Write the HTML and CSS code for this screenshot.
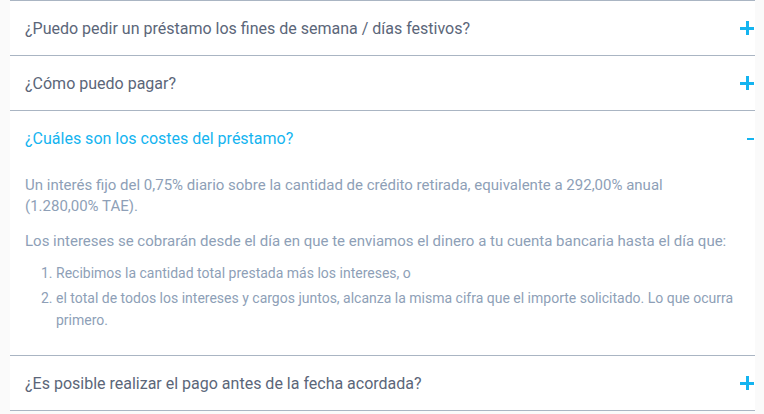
FILE: index.html
```html
<!DOCTYPE html>
<html lang="es">
<head>
    <meta charset="UTF-8">
    <meta name="viewport" content="width=device-width, initial-scale=1.0">
    <title>Preguntas frecuentes</title>
    <link rel="stylesheet" href="styles.css">
</head>
<body>
    <div class="faq">
        <div class="faq-item">
            <div class="faq-question">
                <span>¿Puedo pedir un préstamo los fines de semana / días festivos?</span>
                <span class="faq-toggle faq-plus"></span>
            </div>
        </div>

        <div class="faq-item">
            <div class="faq-question">
                <span>¿Cómo puedo pagar?</span>
                <span class="faq-toggle faq-plus"></span>
            </div>
        </div>

        <div class="faq-item faq-open">
            <div class="faq-question">
                <span>¿Cuáles son los costes del préstamo?</span>
                <span class="faq-toggle faq-minus"></span>
            </div>
            <div class="faq-answer">
                <p>Un interés fijo del 0,75% diario sobre la cantidad de crédito retirada, equivalente a 292,00% anual (1.280,00% TAE).</p>
                <p>Los intereses se cobrarán desde el día en que te enviamos el dinero a tu cuenta bancaria hasta el día que:</p>
                <ol>
                    <li>Recibimos la cantidad total prestada más los intereses, o</li>
                    <li>el total de todos los intereses y cargos juntos, alcanza la misma cifra que el importe solicitado. Lo que ocurra primero.</li>
                </ol>
            </div>
        </div>

        <div class="faq-item">
            <div class="faq-question">
                <span>¿Es posible realizar el pago antes de la fecha acordada?</span>
                <span class="faq-toggle faq-plus"></span>
            </div>
        </div>
    </div>
</body>
</html>
```

FILE: styles.css
```css
:root {
    --faq-blue: #14b4f0;
    --faq-text: #5b6679;
    --faq-light-text: #8e9fb7;
    --faq-border: #aab5c3;
    --faq-bg: #fafafa;
}

* {
    margin: 0;
    padding: 0;
    box-sizing: border-box;
}

body {
    background-color: var(--faq-bg);
    font-family: Roboto, 'Liberation Sans', sans-serif;
    padding: 0 9px 0 10px;
}

.faq {
    background: white;
    border-bottom: 1px solid var(--faq-border);
}

.faq-item {
    border-top: 1px solid var(--faq-border);
}

.faq-question {
    height: 54px;
    display: flex;
    align-items: center;
    justify-content: space-between;
    padding: 0 0 0 15px;
    font-size: 16px;
    color: var(--faq-text);
}

.faq-open .faq-question {
    color: var(--faq-blue);
}

.faq-toggle {
    position: relative;
    width: 14px;
    height: 14px;
    margin-right: 1px;
}

.faq-plus::before,
.faq-plus::after,
.faq-minus::before {
    content: "";
    position: absolute;
    background: var(--faq-blue);
}

.faq-plus::before {
    left: 0;
    right: 0;
    top: 6px;
    height: 3px;
}

.faq-plus::after {
    top: 0;
    bottom: 0;
    left: 6px;
    width: 3px;
}

.faq-minus::before {
    right: 0;
    width: 7px;
    top: 7px;
    height: 2px;
}

.faq-answer {
    padding: 10px 20px 24px 15px;
    font-size: 15px;
    line-height: 21px;
    color: var(--faq-light-text);
}

.faq-answer p {
    margin-bottom: 14px;
}

.faq-answer ol {
    padding-left: 31px;
    margin-top: -4px;
    font-size: 14px;
}

.faq-answer li {
    margin-bottom: 3px;
    line-height: 22px;
}

.faq-answer li:last-child {
    margin-bottom: 0;
}
```
